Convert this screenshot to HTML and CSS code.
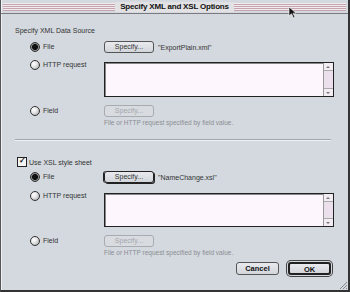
FILE: index.html
```html
<!DOCTYPE html>
<html lang="en">

<head>
    <meta charset="UTF-8">
    <link rel="stylesheet" href="styles.css">
    <title>Specify XML and XSL Options</title>
</head>

<body>
    <div id="window">
        <div id="titlebar">
            <span class="title">Specify XML and XSL Options</span>
        </div>

        <div id="content">
            <p class="group-label">Specify XML Data Source</p>

            <div class="row row-file">
                <span class="radio on">File</span>
                <div class="ctl">
                    <span class="btn">Specify...</span>
                    <span class="filename">"ExportPlain.xml"</span>
                </div>
            </div>
            <div class="row row-http">
                <span class="radio">HTTP request</span>
                <div class="textbox">
                    <div class="scroll"><span class="up"></span><span class="down"></span></div>
                </div>
            </div>
            <div class="row row-field">
                <span class="radio">Field</span>
                <div class="ctl col">
                    <span class="btn disabled">Specify...</span>
                    <span class="hint">File or HTTP request specified by field value.</span>
                </div>
            </div>

            <div class="sep"></div>

            <p class="check on">Use XSL style sheet</p>

            <div class="row row-file second">
                <span class="radio on">File</span>
                <div class="ctl">
                    <span class="btn focus">Specify...</span>
                    <span class="filename">"NameChange.xsl"</span>
                </div>
            </div>
            <div class="row row-http second">
                <span class="radio">HTTP request</span>
                <div class="textbox">
                    <div class="scroll"><span class="up"></span><span class="down"></span></div>
                </div>
            </div>
            <div class="row row-field second">
                <span class="radio">Field</span>
                <div class="ctl col">
                    <span class="btn disabled">Specify...</span>
                    <span class="hint">File or HTTP request specified by field value.</span>
                </div>
            </div>

            <div id="buttons">
                <span class="btn push">Cancel</span>
                <span class="btn push default">OK</span>
            </div>
        </div>

        <svg id="grip" width="9" height="9" viewBox="0 0 9 9">
            <path d="M1 8L8 1M4 8L8 4M7 8L8 7" stroke="#888" stroke-width="1" />
        </svg>
        <svg id="cursor" width="9" height="13" viewBox="0 0 9 13">
            <path d="M1 1L1 10L3.5 7.8L5.5 12L7 11.3L5 7.2L8 7Z" fill="#111" stroke="#fff" stroke-width="0.6" />
        </svg>
    </div>
</body>

</html>
```

FILE: styles.css
```css
* {
    box-sizing: border-box;
    margin: 0;
    padding: 0;
}

body {
    margin: 0;
    background: #d4d9df;
    font-family: 'Liberation Sans', Arial, sans-serif;
    font-size: 7px;
    color: #333;
}

#window {
    position: relative;
    width: 350px;
    height: 292px;
    background: #d4d9df;
    border-left: 1px solid #555;
    border-right: 2px solid #333;
    border-bottom: 2px solid #333;
    box-shadow: inset 1px 0 0 #eef0f3;
}

#titlebar {
    height: 14px;
    padding: 3px 2px 2px 2px;
    background: #e2e2e4;
    border-bottom: 1px solid #7a7a80;
    display: flex;
    justify-content: center;
    align-items: center;
    background-image: repeating-linear-gradient(to bottom, #c6a4ae 0px, #c6a4ae 1px, #f1eaee 1px, #f1eaee 2px);
    background-clip: content-box;
}

.title {
    background: #e2e2e4;
    padding: 0 5px;
    font-weight: bold;
    font-size: 8px;
    letter-spacing: -0.2px;
    line-height: 10px;
    color: #111;
}

#content {
    padding: 12px 16px 0 14px;
}

.group-label {
    line-height: 10px;
    height: 10px;
}

.row {
    display: grid;
    grid-template-columns: 74px 230px;
    padding-left: 15px;
}

.radio {
    display: flex;
    align-items: center;
    gap: 3px;
    height: 12px;
    line-height: 12px;
}

.radio::before {
    content: "";
    width: 8px;
    height: 8px;
    border-radius: 50%;
    border: 1px solid #333;
    background: radial-gradient(circle at 35% 35%, #fff 0, #e6e6e6 40%, #9a9a9a 100%);
}

.radio.on::before {
    background: radial-gradient(circle at 50% 50%, #111 0, #111 45%, #888 60%, #ccc 100%);
}

.ctl {
    display: flex;
    align-items: center;
    gap: 4px;
}

.ctl.col {
    flex-direction: column;
    align-items: flex-start;
    gap: 2px;
}

.btn {
    display: inline-block;
    width: 50px;
    height: 12px;
    line-height: 10px;
    text-align: center;
    border: 1px solid #555;
    border-radius: 3px;
    background: linear-gradient(#e8eaee, #d2d5da);
    color: #333;
}

.btn.disabled {
    border-color: #a8abb0;
    color: #a4a7ac;
    background: #d8dbe0;
}

.btn.focus {
    border: 1px solid #222;
    box-shadow: -1px 0 0 #222, 1px 1px 0 #222;
}

.hint {
    color: #8a8d92;
    font-size: 6.5px;
    line-height: 8px;
}

.row-file {
    margin-top: 5px;
}

.row-http {
    margin-top: 9px;
}

.row-http .radio {
    align-self: start;
    margin-top: -3px;
}

.textbox {
    position: relative;
    width: 230px;
    height: 35px;
    background: #fdf6fc;
    border: 1px solid #222;
    box-shadow: inset 1px 1px 0 #888;
}

.scroll {
    position: absolute;
    right: 0;
    top: 0;
    bottom: 0;
    width: 10px;
    background: #ece0ec;
    border-left: 1px solid #999;
}

.scroll .up,
.scroll .down {
    position: absolute;
    left: 0;
    right: 0;
    height: 8px;
    background: #f3ecf3;
}

.scroll .up {
    top: 0;
    border-bottom: 1px solid #aaa;
}

.scroll .down {
    bottom: 0;
    border-top: 1px solid #aaa;
}

.scroll .up::after,
.scroll .down::after {
    content: "";
    position: absolute;
    left: 2px;
    border-left: 2px solid transparent;
    border-right: 2px solid transparent;
}

.scroll .up::after {
    top: 3px;
    border-bottom: 2px solid #777;
}

.scroll .down::after {
    top: 3px;
    border-top: 2px solid #777;
}

.row-field {
    margin-top: 8px;
}

.row-field .radio {
    align-self: start;
}

.sep {
    height: 1px;
    background: #a3a7ad;
    border-bottom: 1px solid #eef0f3;
    box-sizing: content-box;
    margin: 12px 1px 0 0;
}

.check {
    display: flex;
    align-items: center;
    gap: 2px;
    height: 10px;
    margin-top: 16px;
    margin-left: 2px;
}

.check::before {
    content: "\2713";
    width: 8px;
    height: 8px;
    border: 1px solid #222;
    background: #f4f4f4;
    font-size: 8px;
    line-height: 6px;
    font-weight: bold;
    color: #111;
    text-align: center;
}

.second.row-file {
    margin-top: 4px;
}

.second.row-http {
    margin-top: 10px;
}

.second .textbox {
    height: 34px;
}

.second.row-field {
    margin-top: 8px;
}

#buttons {
    display: flex;
    justify-content: flex-end;
    gap: 9px;
    margin-top: 5px;
    margin-right: 1px;
}

.btn.push {
    width: 43px;
    height: 13px;
    line-height: 11px;
    font-weight: bold;
    color: #111;
    font-size: 7.5px;
}

.btn.default {
    width: 43px;
    border: 2px solid #222;
    box-shadow: 0 0 0 1px #d4d9df, 0 0 0 2px #444;
}

#grip {
    position: absolute;
    right: 0;
    bottom: 0;
}

#cursor {
    position: absolute;
    left: 287px;
    top: 6px;
}
```
